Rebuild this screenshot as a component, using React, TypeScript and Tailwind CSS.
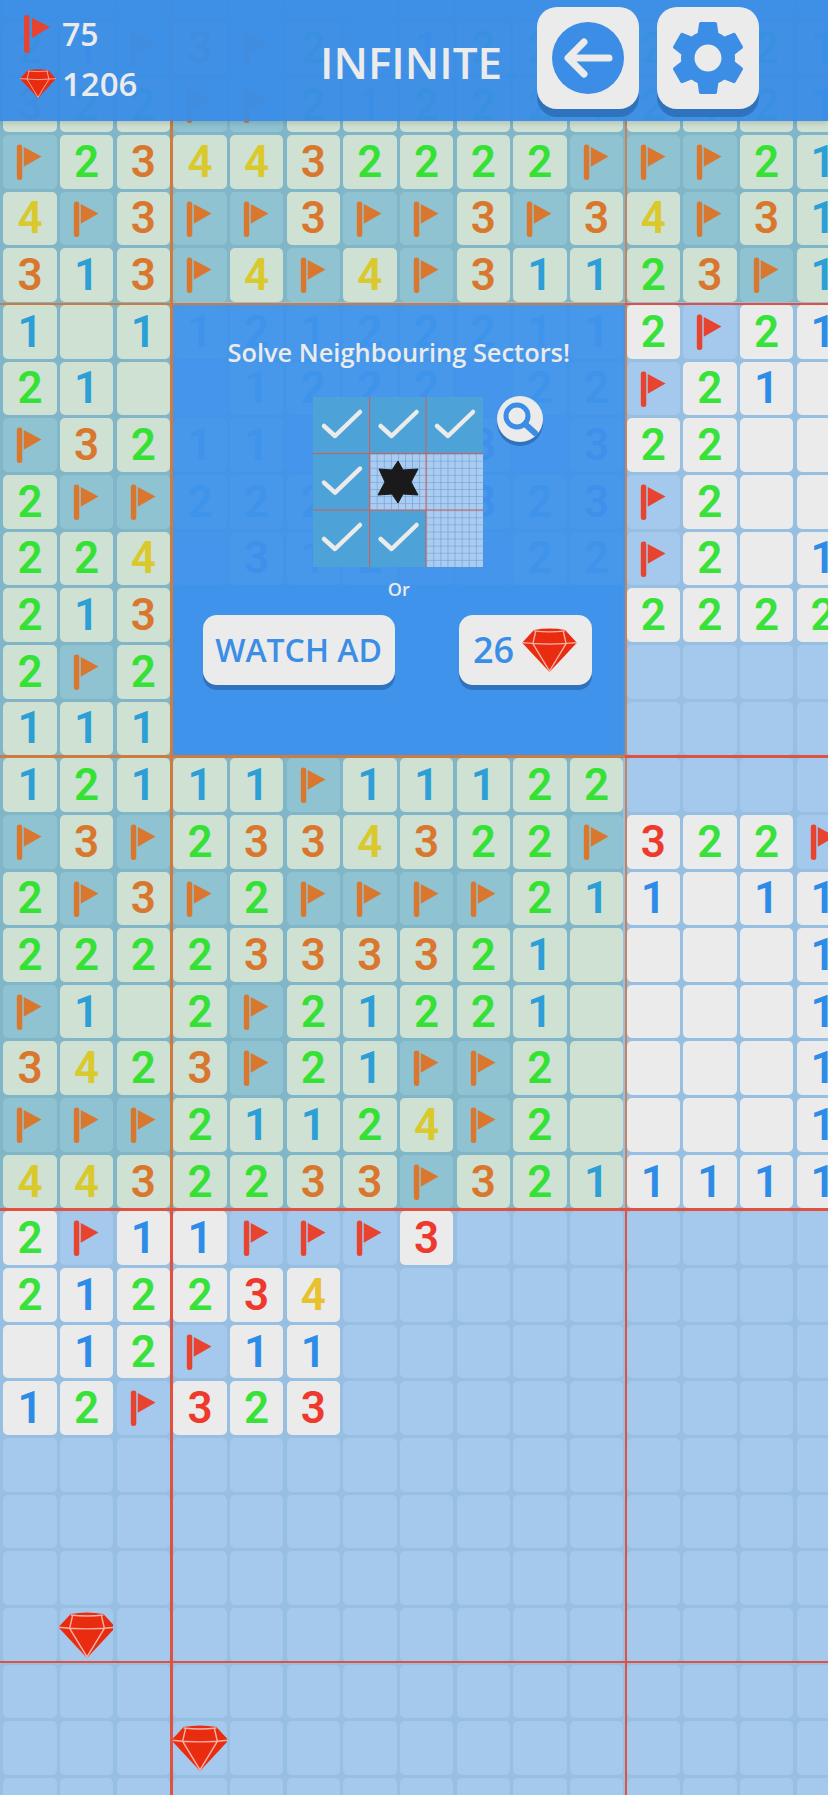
import { MdSettings } from 'react-icons/md';

type Theme = 'solved' | 'open' | 'panel';

// board rows, top to bottom. F flag, U hidden, . empty, N nothing, G gem
const rows = [
  'UUUUUUUUUUUUUUU',
  '21F3F2U12212U21',
  '322FF2122212121',
  'F234432222FFF21',
  '4F3FF3FF3F34F31',
  '313F4F4F31123F1',
  '1.1121222112F21',
  '21.U1222U22F21.',
  'F3211UUU3U322..',
  '2FF222UU323F2..',
  '224U312UU22F2.1',
  '213NNNNNNNN2222',
  '2F2NNNNNNNNUUUU',
  '111NNNNNNNNUUUU',
  '12111F11122UUUU',
  'F3F2334322F322F',
  '2F3F2FFFF211.11',
  '2222333321....1',
  'F1.2F21221....1',
  '3423F21FF2....1',
  'FFF21124F2....1',
  '4432233F3211111',
  '2F11FFF3UUUUUUU',
  '212234UUUUUUUUU',
  '.12F11UUUUUUUUU',
  '12F323UUUUUUUUU',
  'UUUUUUUUUUUUUUU',
  'UUUUUUUUUUUUUUU',
  'UUUUUUUUUUUUUUU',
  'UGUUUUUUUUUUUUU',
  'UUUUUUUUUUUUUUU',
  'UUUGUUUUUUUUUUU',
  'UUUUUUUUUUUUUUU',
];

const gapColor = { solved: 'bg-[#80b6c7]', open: 'bg-[#97bfe1]', panel: 'bg-[#97bfe1]' };
const tileColor = { solved: 'bg-[#cfe1d2]', open: 'bg-[#ebebeb]', panel: 'bg-[#ebebeb]' };
const hiddenColor = { solved: 'bg-[#8fc3d2]', open: 'bg-[#a4c9ec]', panel: 'bg-[#a4c9ec]' };
const flagColor = { solved: 'text-[#d9772f]', open: 'text-[#e8432f]', panel: 'text-[#e8432f]' };

const digitColor: Record<string, Record<Theme, string>> = {
  '1': { solved: 'text-[#2b9fd6]', open: 'text-[#2d8ce8]', panel: 'text-[#2d8ce8]' },
  '2': { solved: 'text-[#36e136]', open: 'text-[#38e23a]', panel: 'text-[#2d8ce8]' },
  '3': { solved: 'text-[#d9772f]', open: 'text-[#ee3a2c]', panel: 'text-[#2d5ce8]' },
  '4': { solved: 'text-[#d9c92d]', open: 'text-[#e8c22e]', panel: 'text-[#e8c22e]' },
};

function themeAt(row: number, col: number): Theme {
  const sx = col < 3 ? 0 : col < 11 ? 1 : 2;
  const sy = row < 6 ? 0 : row < 14 ? 1 : row < 22 ? 2 : 3;
  if (sy === 1 && sx === 1) return 'panel';
  if (sy === 0) return 'solved';
  if (sy === 1 && sx === 0) return 'solved';
  if (sy === 2 && sx < 2) return 'solved';
  return 'open';
}

function Flag({ className }: { className?: string }) {
  return (
    <svg viewBox="0 0 54 53" className={className} fill="currentColor">
      <rect x="14" y="9" width="5.5" height="36" rx="2.5" />
      <path d="M21 11.5 39 21 21 31.5Z" />
    </svg>
  );
}

function Gem({ className }: { className?: string }) {
  return (
    <svg viewBox="0 0 56 45" className={className}>
      <path d="M12 2Q28-1 44 2L56 15 28 45 0 15Z" fill="#e92c10" />
      <path
        d="M0 15Q28 18 56 15M14 3 11 16 28 44 45 16 42 3M12 3Q28 5 44 3"
        fill="none"
        stroke="#f3b4a8"
        strokeWidth="1.4"
      />
    </svg>
  );
}

function Cell({ value, row, col }: { value: string; row: number; col: number }) {
  const theme = themeAt(row, col);
  if (value === 'N') return <div className="bg-[#4194ea]" />;

  let tile;
  if (value === 'U') {
    tile = <div className={`h-full w-full rounded-[5px] ${hiddenColor[theme]}`} />;
  } else if (value === 'G') {
    tile = (
      <div className={`flex h-full w-full items-center justify-center rounded-[5px] ${hiddenColor[theme]}`}>
        <Gem className="h-[46px] w-[58px] shrink-0" />
      </div>
    );
  } else if (value === 'F') {
    tile = (
      <div className={`h-full w-full rounded-[5px] ${hiddenColor[theme]} ${flagColor[theme]}`}>
        <Flag className="h-full w-full" />
      </div>
    );
  } else {
    tile = (
      <div
        className={`flex h-full w-full items-center justify-center rounded-[5px] text-[44px] leading-none font-semibold ${tileColor[theme]} ${value === '.' ? '' : digitColor[value][theme]}`}
      >
        {value === '.' ? '' : value}
      </div>
    );
  }
  return <div className={`pt-[3px] pl-[3.33px] ${gapColor[theme]}`}>{tile}</div>;
}

function MiniMap() {
  const check = (x: number, y: number) => (
    <path
      key={`${x}-${y}`}
      d={`M${x + 11} ${y + 29}l11 10 25-24`}
      fill="none"
      stroke="#ebebeb"
      strokeWidth="4.5"
      strokeLinecap="round"
      strokeLinejoin="round"
    />
  );
  return (
    <svg viewBox="0 0 170 170" className="h-[170px] w-[170px]">
      <defs>
        <pattern id="fine" width="7.08" height="7.08" patternUnits="userSpaceOnUse">
          <rect width="7.08" height="7.08" fill="#a9ccef" />
          <path d="M0 0H7.08M0 0V7.08" stroke="#5d92d9" strokeWidth="1" />
        </pattern>
      </defs>
      <path d="M0 0H170V56.6H0ZM0 56.6H56.6V170H0ZM56.6 113H113V170H56.6Z" fill="#4da2d8" />
      <rect x="56.6" y="56.6" width="113.4" height="56.4" fill="url(#fine)" />
      <rect x="113" y="113" width="57" height="57" fill="url(#fine)" />
      {check(0, 0)}
      {check(56.6, 0)}
      {check(113, 0)}
      {check(0, 56.6)}
      {check(0, 113)}
      {check(56.6, 113)}
      <path d="M56.6 0V170M113 0V170M0 56.6H170M0 113H170" stroke="#d95a50" strokeWidth="1" />
      <path
        d="M85 64 90 73 105 72 98 85 105 98 90 97 85 106 79 97 65 98 72 85 66 72 79 73Z"
        fill="#1a1a1a"
        stroke="#1a1a1a"
        strokeWidth="1"
        strokeLinejoin="round"
      />
    </svg>
  );
}

export default function App() {
  return (
    <div className="relative h-[1795px] w-[828px] overflow-hidden bg-[#97bfe1] font-['Open_Sans',sans-serif]">
      {/* board */}
      <div className="-mt-[38px] grid w-[850px] auto-rows-[56.67px] grid-cols-[repeat(15,56.67px)] font-['Roboto',sans-serif]">
        {rows.map((row, r) =>
          row.split('').map((value, c) => <Cell key={`${r}-${c}`} value={value} row={r} col={c} />),
        )}
      </div>

      {/* sector lines */}
      <div className="absolute top-0 left-[170px] h-[1209px] w-[2.5px] bg-[#cf7a3f]" />
      <div className="absolute top-[1209px] left-[170px] h-[586px] w-[2.5px] bg-[#e0513f]" />
      <div className="absolute top-0 left-[625px] h-[1209px] w-[2px] bg-[#c9825a]" />
      <div className="absolute top-[1209px] left-[625px] h-[586px] w-[2px] bg-[#e0513f]" />
      <div className="absolute top-[302.5px] left-0 h-[2.5px] w-[625px] bg-[#cf7a3f]" />
      <div className="absolute top-[302.5px] left-[625px] h-[2.5px] w-[203px] bg-[#e0513f]" />
      <div className="absolute top-[755px] left-0 h-[2.5px] w-[625px] bg-[#cf7a3f]" />
      <div className="absolute top-[755px] left-[625px] h-[2.5px] w-[203px] bg-[#e0513f]" />
      <div className="absolute top-[1208px] left-0 h-[2.5px] w-[828px] bg-[#e0513f]" />
      <div className="absolute top-[1660.5px] left-0 h-[2.5px] w-[828px] bg-[#e0513f]" />

      {/* header */}
      <div className="absolute top-0 left-0 flex h-[121px] w-[828px] items-start bg-[#3b8de6]/97 text-[#ebebeb] shadow-[0_2px_6px_rgba(0,0,0,0.15)]">
        <div className="flex w-[290px] flex-col pt-[15px] pl-[20px]">
          <div className="flex h-[38px] items-center gap-[12px] pl-[4px]">
            <svg viewBox="0 0 26 38" className="h-[38px] w-[26px] text-[#e8432f]" fill="currentColor">
              <rect x="0" y="0" width="5.5" height="38" rx="2.5" />
              <path d="M8 3 26 12 8 23Z" />
            </svg>
            <span className="text-[32px] leading-none font-semibold">75</span>
          </div>
          <div className="mt-[15px] flex h-[30px] items-center gap-[6px]">
            <Gem className="h-[29px] w-[36px]" />
            <span className="text-[33px] leading-none font-semibold">1206</span>
          </div>
        </div>
        <div className="mt-[40px] w-[247px] pl-[30px] text-[44px] leading-none font-semibold">INFINITE</div>
        <div className="mt-[7px] flex gap-[18px]">
          <button className="flex h-[102px] w-[102px] items-center justify-center rounded-[20px] bg-[#ebebeb] shadow-[0_8px_0_#2f72bd]">
            <svg viewBox="0 0 72 72" className="h-[72px] w-[72px]">
              <circle cx="36" cy="36" r="36" fill="#3b8de6" />
              <path
                d="M57 36H17M32 20 16 36 32 52"
                fill="none"
                stroke="#ebebeb"
                strokeWidth="7"
                strokeLinecap="round"
                strokeLinejoin="round"
              />
            </svg>
          </button>
          <button className="flex h-[102px] w-[102px] items-center justify-center rounded-[20px] bg-[#ebebeb] shadow-[0_8px_0_#2f72bd]">
            <MdSettings className="h-[90px] w-[90px] text-[#3b8de6]" />
          </button>
        </div>
      </div>

      {/* sector locked panel */}
      <div className="absolute top-[305px] left-[172.5px] flex h-[450px] w-[452.5px] flex-col items-center bg-[#3f93ea]/96 pt-[32px] text-[#ebebeb]">
        <div className="text-[25.4px] leading-[30px] font-semibold">Solve Neighbouring Sectors!</div>
        <div className="relative mt-[30px] -ml-[1px]">
          <MiniMap />
          <div className="absolute top-[-1px] left-[184px] flex h-[46px] w-[46px] items-center justify-center rounded-full bg-[#ebebeb] shadow-[0_4px_0_#2f72bd]">
            <svg viewBox="0 0 46 46" className="h-[46px] w-[46px]">
              <circle cx="20" cy="20" r="11" fill="none" stroke="#3b8de6" strokeWidth="5" />
              <path d="M28 28 38 37" stroke="#3b8de6" strokeWidth="6" strokeLinecap="round" />
            </svg>
          </div>
        </div>
        <div className="mt-[10px] text-[18px] leading-[24px] font-semibold">Or</div>
        <div className="mt-[14px] flex w-full items-start pl-[30px] text-[#3a8ee6]">
          <button className="flex h-[70px] w-[192px] items-center justify-center rounded-[14px] bg-[#ebebeb] text-[32px] font-semibold shadow-[0_5px_0_#2f72bd]">
            WATCH AD
          </button>
          <button className="ml-[64px] flex h-[70px] w-[133px] items-center justify-center gap-[8px] rounded-[14px] bg-[#ebebeb] text-[36px] font-semibold shadow-[0_5px_0_#2f72bd]">
            26
            <Gem className="h-[44px] w-[55px]" />
          </button>
        </div>
      </div>
    </div>
  );
}
